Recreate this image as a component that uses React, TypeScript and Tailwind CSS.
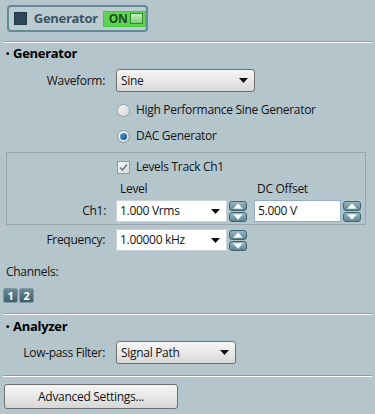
import React from 'react';

const font = "font-['Open_Sans','Liberation_Sans',sans-serif]";

function Arrow() {
  return (
    <svg width="9" height="5" viewBox="0 0 9 5" className="shrink-0">
      <path d="M0 0h9L4.5 5z" fill="#111" />
    </svg>
  );
}

function Select({ value, width }: { value: string; width: string }) {
  return (
    <div
      className={`${width} h-[23px] flex items-center justify-between pl-[4px] pr-[6px] rounded-[3px] border border-[#707070] bg-gradient-to-b from-[#f6f6f6] via-[#e9e9e9] to-[#d9d9d9]`}
    >
      <span>{value}</span>
      <Arrow />
    </div>
  );
}

function Combo({ value }: { value: string }) {
  return (
    <div className="w-[111px] h-[22px] flex items-center justify-between pl-[3px] pr-[6px] border border-[#c9d3d8] bg-white">
      <span>{value}</span>
      <Arrow />
    </div>
  );
}

function SpinHalf({ up }: { up: boolean }) {
  return (
    <div className="w-[18px] h-[10px] rounded-[3px] border border-[#3e6470] bg-gradient-to-b from-[#9ab7c1] to-[#5d8591] flex items-center justify-center">
      <svg width="10" height="6" viewBox="0 0 10 6">
        <path d={up ? 'M0.5 5.5L5 0.5L9.5 5.5z' : 'M0.5 0.5L5 5.5L9.5 0.5z'} fill="#fff" stroke="#dfe9ec" strokeWidth="0.6" />
      </svg>
    </div>
  );
}

function Spinner() {
  return (
    <div className="flex flex-col gap-[1px] ml-[2px]">
      <SpinHalf up />
      <SpinHalf up={false} />
    </div>
  );
}

function Separator({ className }: { className: string }) {
  return <div className={`${className} mx-[3px] h-[2px] border-t border-[#9a9a9a] border-b border-b-white`} />;
}

function Title({ children, className }: { children: React.ReactNode; className: string }) {
  return (
    <div className={`${className} h-[20px] flex items-center pl-[6px] font-bold text-[13px] text-black`}>
      <span className="text-[9px] mr-[4px]">•</span>
      {children}
    </div>
  );
}

function Label({ children }: { children: React.ReactNode }) {
  return <div className="w-[106px] text-right pr-[1px] shrink-0">{children}</div>;
}

export default function App() {
  return (
    <div className={`w-[375px] h-[414px] overflow-hidden bg-[#b4c5cc] text-[12px] tracking-[-0.3px] text-[#141414] ${font}`}>
      {/* Header toggle */}
      <div className="pt-[5px] pl-[7px]">
        <div className="w-[141px] h-[27px] rounded-[4px] border-2 border-[#668a95] bg-[#bacbd2] flex items-center pl-[5px]">
          <div className="w-[13px] h-[13px] bg-[#2e4758] border border-[#23394a]" />
          <span className="ml-[7px] font-bold text-[13px] text-[#3a5566]">Generator</span>
          <div className="ml-[5px] w-[44px] h-[16px] border border-[#3fcf36] bg-[#5fd454] flex items-center pl-[5px] pr-[2px] justify-between">
            <span className="font-bold text-[12px] leading-none text-[#1c4d1c]">ON</span>
            <div className="w-[13px] h-[11px] border border-[#3a8a32] bg-gradient-to-b from-[#c8efc2] to-[#7fcf72]" />
          </div>
        </div>
      </div>

      <Separator className="mt-[9px]" />
      <Title className="mt-[1px]">Generator</Title>

      {/* Waveform */}
      <div className="mt-[5px] flex items-center">
        <Label>Waveform:</Label>
        <div className="ml-[10px]">
          <Select value="Sine" width="w-[139px]" />
        </div>
      </div>

      {/* Radios */}
      <div className="mt-[8px] h-[20px] flex items-center pl-[117px]">
        <div className="w-[13px] h-[13px] rounded-full border border-[#9aa5aa] bg-gradient-to-br from-[#f4f4f4] to-[#d5d9db]" />
        <span className="ml-[6px]">High Performance Sine Generator</span>
      </div>
      <div className="mt-[6px] h-[20px] flex items-center pl-[117px]">
        <div className="w-[13px] h-[13px] rounded-full border border-[#8a969c] bg-gradient-to-br from-[#f4f4f4] to-[#d5d9db] flex items-center justify-center">
          <div className="w-[7px] h-[7px] rounded-full bg-gradient-to-br from-[#4aa3d8] to-[#14507e]" />
        </div>
        <span className="ml-[6px]">DAC Generator</span>
      </div>

      {/* Group box */}
      <div className="mt-[6px] ml-[6px] w-[360px] border border-[#9aa6ab] pb-[2px]">
        <div className="mt-[5px] h-[18px] flex items-center pl-[110px]">
          <div className="w-[13px] h-[13px] border border-[#8e9a9f] bg-gradient-to-br from-[#f6f6f6] to-[#d8dcde] flex items-center justify-center">
            <svg width="9" height="9" viewBox="0 0 9 9">
              <path d="M1 4.5L3.5 7L8 1.5" fill="none" stroke="#6b7a82" strokeWidth="1.6" />
            </svg>
          </div>
          <span className="ml-[6px]">Levels Track Ch1</span>
        </div>
        <div className="mt-[4px] h-[18px] flex items-center">
          <span className="ml-[113px] w-[137px]">Level</span>
          <span>DC Offset</span>
        </div>
        <div className="mt-[2px] flex items-center">
          <div className="w-[100px] text-right pr-[1px] shrink-0">Ch1:</div>
          <div className="ml-[9px] flex items-center">
            <Combo value="1.000 Vrms" />
            <Spinner />
            <div className="ml-[7px] w-[87px] h-[22px] flex items-center pl-[3px] border border-[#8fb0c8] bg-white">5.000 V</div>
            <Spinner />
          </div>
        </div>
      </div>

      {/* Frequency */}
      <div className="mt-[4px] flex items-center">
        <Label>Frequency:</Label>
        <div className="ml-[10px] flex items-center">
          <Combo value="1.00000 kHz" />
          <Spinner />
        </div>
      </div>

      {/* Channels */}
      <div className="mt-[12px] h-[18px] flex items-center pl-[6px]">Channels:</div>
      <div className="mt-[7px] pl-[3px] flex gap-[1px]">
        {['1', '2'].map((n) => (
          <div
            key={n}
            className="w-[15px] h-[15px] rounded-[2px] border border-[#7d9aa4] bg-gradient-to-b from-[#6a8a96] to-[#3f5f6b] flex items-center justify-center text-white font-bold text-[11px] leading-none"
          >
            {n}
          </div>
        ))}
      </div>

      <Separator className="mt-[10px]" />
      <Title className="mt-[2px]">Analyzer</Title>

      {/* Low-pass */}
      <div className="mt-[4px] flex items-center">
        <Label>Low-pass Filter:</Label>
        <div className="ml-[10px]">
          <Select value="Signal Path" width="w-[120px]" />
        </div>
      </div>

      <Separator className="mt-[11px]" />

      <div className="mt-[7px] pl-[4px]">
        <div className="w-[174px] h-[25px] rounded-[3px] border border-[#707070] bg-gradient-to-b from-[#f4f4f4] via-[#e8e8e8] to-[#d6d6d6] flex items-center justify-center">
          Advanced Settings...
        </div>
      </div>
    </div>
  );
}
